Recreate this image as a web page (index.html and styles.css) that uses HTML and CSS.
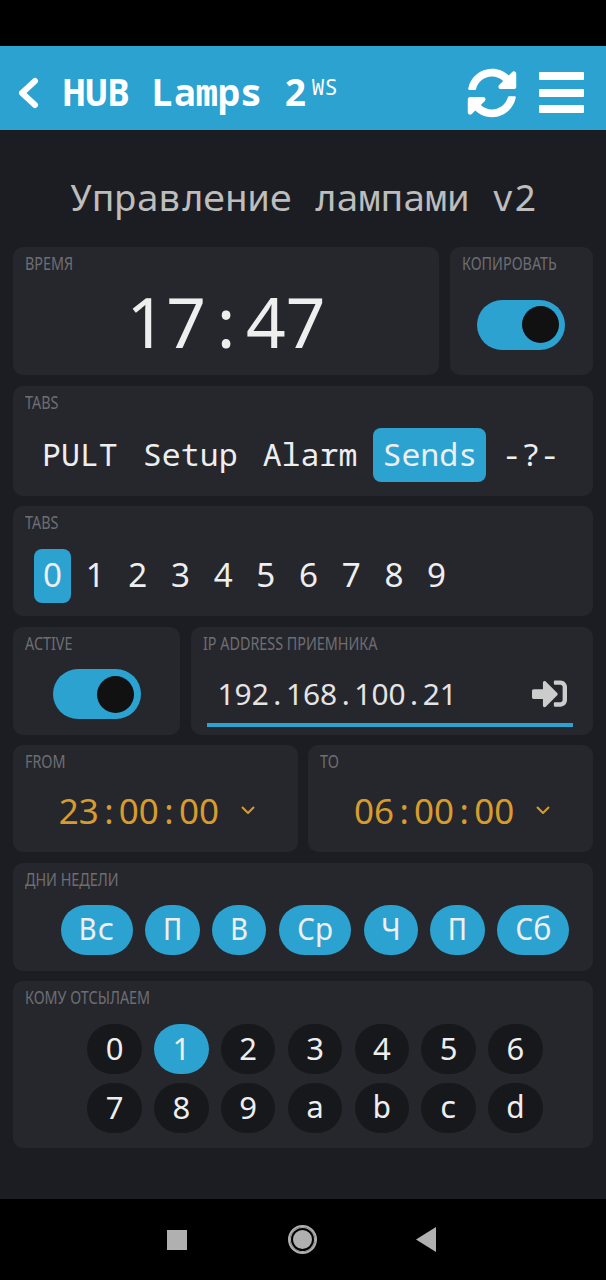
FILE: index.html
```html
<!DOCTYPE html>
<html lang="en">

<head>
    <meta charset="UTF-8">
    <meta name="viewport" content="width=device-width, initial-scale=1.0">
    <title>HUB Lamps 2</title>
    <link rel="stylesheet" href="styles.css">
</head>

<body>

    <div class="status-bar"></div>

    <!-- Top Bar -->
    <div class="top-bar">
        <svg class="back-icon" viewBox="0 0 22 32">
            <path d="M18 4 L5 16 L18 28" />
        </svg>
        <h1>HUB Lamps 2<sup>WS</sup></h1>
        <svg class="sync-icon" viewBox="0 0 512 512">
            <path d="M370.72 133.28C339.458 104.008 298.888 87.962 255.848 88c-77.458.068-144.328 53.178-162.791 126.85-1.344 5.363-6.122 9.15-11.651 9.15H24.103c-7.498 0-13.194-6.807-11.807-14.176C33.933 94.924 134.813 8 256 8c66.448 0 126.791 26.136 171.315 68.685L463.03 40.97C478.149 25.851 504 36.559 504 57.941V192c0 13.255-10.745 24-24 24H345.941c-21.382 0-32.09-25.851-16.971-40.971l41.75-41.749zM32 296h134.059c21.382 0 32.09 25.851 16.971 40.971l-41.75 41.75c31.262 29.273 71.835 45.319 114.876 45.28 77.418-.07 144.315-53.144 162.787-126.849 1.344-5.363 6.122-9.15 11.651-9.15h57.304c7.498 0 13.194 6.807 11.807 14.176C478.067 417.076 377.187 504 256 504c-66.448 0-126.791-26.136-171.315-68.685L48.97 471.03C33.851 486.149 8 475.441 8 454.059V320c0-13.255 10.745-24 24-24z" />
        </svg>
        <div class="menu-icon"><span></span><span></span><span></span></div>
    </div>

    <!-- Controls -->
    <div class="content">
        <h2>Управление лампами v2</h2>

        <div class="row">
            <div class="card card-time">
                <p class="label">Время</p>
                <div class="card-body center clock-body"><span class="num clock">17<i>:</i>47</span></div>
            </div>
            <div class="card card-copy">
                <p class="label">Копировать</p>
                <div class="card-body center"><div class="toggle"><span></span></div></div>
            </div>
        </div>

        <div class="row">
            <div class="card card-tabs">
                <p class="label">Tabs</p>
                <div class="card-body tabs">
                    <span class="tab">PULT</span>
                    <span class="tab">Setup</span>
                    <span class="tab">Alarm</span>
                    <span class="tab active">Sends</span>
                    <span class="tab">-?-</span>
                </div>
            </div>
        </div>

        <div class="row">
            <div class="card card-tabs">
                <p class="label">Tabs</p>
                <div class="card-body tabs tabs-num">
                    <span class="tab num active">0</span>
                    <span class="tab num">1</span>
                    <span class="tab num">2</span>
                    <span class="tab num">3</span>
                    <span class="tab num">4</span>
                    <span class="tab num">5</span>
                    <span class="tab num">6</span>
                    <span class="tab num">7</span>
                    <span class="tab num">8</span>
                    <span class="tab num">9</span>
                </div>
            </div>
        </div>

        <div class="row">
            <div class="card card-active">
                <p class="label">Active</p>
                <div class="card-body center"><div class="toggle"><span></span></div></div>
            </div>
            <div class="card card-ip">
                <p class="label">IP address приемника</p>
                <div class="card-body ip-field">
                    <span class="num ip-value">192<i>.</i>168<i>.</i>100<i>.</i>21</span>
                    <svg class="enter-icon" viewBox="0 0 512 512">
                        <path d="M416 448h-84c-6.6 0-12-5.4-12-12v-40c0-6.6 5.4-12 12-12h84c17.7 0 32-14.3 32-32V160c0-17.7-14.3-32-32-32h-84c-6.6 0-12-5.4-12-12V76c0-6.6 5.4-12 12-12h84c53 0 96 43 96 96v192c0 53-43 96-96 96zm-47-201L201 79c-15-15-41-4.5-41 17v96H24c-13.3 0-24 10.7-24 24v96c0 13.3 10.7 24 24 24h136v96c0 21.5 26 32 41 17l168-168c9.3-9.4 9.3-24.6 0-34z" />
                    </svg>
                </div>
            </div>
        </div>

        <div class="row">
            <div class="card card-range">
                <p class="label">From</p>
                <div class="card-body center time-select">
                    <span class="num">23<i>:</i>00<i>:</i>00</span>
                    <svg viewBox="0 0 14 8"><path d="M1 1 L7 7 L13 1" /></svg>
                </div>
            </div>
            <div class="card card-range">
                <p class="label">To</p>
                <div class="card-body center time-select">
                    <span class="num">06<i>:</i>00<i>:</i>00</span>
                    <svg viewBox="0 0 14 8"><path d="M1 1 L7 7 L13 1" /></svg>
                </div>
            </div>
        </div>

        <div class="row">
            <div class="card card-days">
                <p class="label">Дни недели</p>
                <div class="card-body pills">
                    <span class="pill active">Вс</span>
                    <span class="pill active">П</span>
                    <span class="pill active">В</span>
                    <span class="pill active">Ср</span>
                    <span class="pill active">Ч</span>
                    <span class="pill active">П</span>
                    <span class="pill active">Сб</span>
                </div>
            </div>
        </div>

        <div class="row">
            <div class="card card-targets">
                <p class="label">Кому отсылаем</p>
                <div class="targets">
                    <span class="pill num">0</span>
                    <span class="pill num active">1</span>
                    <span class="pill num">2</span>
                    <span class="pill num">3</span>
                    <span class="pill num">4</span>
                    <span class="pill num">5</span>
                    <span class="pill num">6</span>
                    <span class="pill num">7</span>
                    <span class="pill num">8</span>
                    <span class="pill num">9</span>
                    <span class="pill">a</span>
                    <span class="pill">b</span>
                    <span class="pill">c</span>
                    <span class="pill">d</span>
                </div>
            </div>
        </div>
    </div>

    <!-- Android navigation -->
    <div class="nav-bar">
        <span class="nav-square"></span>
        <span class="nav-circle"></span>
        <span class="nav-back"></span>
    </div>

</body>

</html>
```

FILE: styles.css
```css
/* Basic reset */
* {
    margin: 0;
    padding: 0;
    box-sizing: border-box;
}

body {
    display: flex;
    flex-direction: column;
    height: 1280px;
    background-color: #1c1d22;
    font-family: "Noto Sans Mono", "DejaVu Sans Mono", monospace;
    color: #eee;
    overflow: hidden;
}

/* Digits without the slashed zero, separators keep a full cell */
.num {
    font-family: "Noto Sans", sans-serif;
}

.num i {
    display: inline-block;
    width: 0.572em;
    font-style: normal;
    text-align: center;
}

.status-bar {
    height: 46px;
    background-color: #000;
}

/* Top Bar */
.top-bar {
    display: flex;
    align-items: center;
    height: 84px;
    padding: 9px 22px 0 17px;
    background-color: #2ca2d1;
    color: #fff;
}

.top-bar h1 {
    flex: 1;
    margin-left: 24px;
    font-size: 36.9px;
    font-weight: bold;
    line-height: 1;
}

.top-bar sup {
    margin-left: 5px;
    font-size: 21.6px;
    font-weight: normal;
    line-height: 0;
    vertical-align: 11px;
}

.back-icon {
    width: 22px;
    height: 32px;
    fill: none;
    stroke: #fff;
    stroke-width: 6;
    stroke-linecap: round;
    stroke-linejoin: round;
}

.sync-icon {
    width: 50px;
    height: 50px;
    margin-right: 22px;
    fill: #fff;
}

.menu-icon {
    display: flex;
    flex-direction: column;
    gap: 8.5px;
    width: 45px;
}

.menu-icon span {
    height: 8px;
    background-color: #fff;
    border-radius: 1px;
}

/* Controls */
.content {
    flex: 1;
    display: flex;
    flex-direction: column;
    gap: 10.5px;
    padding: 0 13px;
}

.content h2 {
    height: 106.5px;
    padding-top: 45px;
    font-size: 37px;
    font-weight: normal;
    line-height: 44px;
    text-align: center;
    color: #bdbdbd;
}

.row {
    display: flex;
    gap: 10.5px;
}

.card {
    display: flex;
    flex-direction: column;
    padding: 6px 12px 0;
    background-color: #26272d;
    border-radius: 10px;
}

.label {
    height: 20px;
    font-family: "Noto Sans", sans-serif;
    font-size: 17.5px;
    line-height: 20px;
    text-transform: uppercase;
    white-space: nowrap;
    color: #6d6e73;
    transform: scaleX(0.82);
    transform-origin: left;
}

.card-body {
    flex: 1;
    display: flex;
    align-items: center;
}

.center {
    justify-content: center;
}

.card-time { width: 426px; height: 128px; }
.card-copy { width: 143.5px; height: 128px; }
.card-tabs { width: 100%; height: 110px; }
.card-active { width: 167px; height: 108px; }
.card-ip { flex: 1; height: 108px; }
.card-range { flex: 1; height: 107px; }
.card-days { width: 100%; height: 108px; }
.card-targets { width: 100%; height: 167px; }

.clock-body {
    padding-bottom: 5px;
}

.clock {
    font-size: 69.5px;
    line-height: 1;
    color: #eee;
}

/* Toggle */
.toggle {
    display: flex;
    justify-content: flex-end;
    align-items: center;
    width: 88px;
    height: 50px;
    margin-top: 1px;
    padding-right: 6.5px;
    background-color: #2ca2d1;
    border-radius: 25px;
}

.toggle span {
    width: 37px;
    height: 37px;
    background-color: #111;
    border-radius: 50%;
}

/* Tabs */
.tabs {
    gap: 7px;
    padding: 3px 0 0 8px;
}

.tabs-num {
    gap: 5.7px;
    padding-left: 9px;
}

.tab {
    height: 54px;
    padding: 0 9px;
    font-size: 31.6px;
    line-height: 52px;
    border-radius: 8px;
}

.tab.num {
    font-size: 33.2px;
    line-height: 52px;
}

.tab.active {
    background-color: #2ca2d1;
}

/* IP input */
.ip-field {
    justify-content: space-between;
    margin: 0 8px 8px 4px;
    padding: 11px 6px 0 11px;
    border-bottom: 4px solid #2ca2d1;
}

.ip-value {
    font-size: 29.9px;
    color: #e4e4e4;
}

.enter-icon {
    width: 35px;
    height: 35px;
    fill: #ccc;
}

/* Time selects */
.time-select {
    gap: 22px;
    padding: 0 0 3px 3px;
    font-size: 35px;
    color: #d79c2d;
}

.time-select svg {
    width: 14px;
    height: 8px;
    fill: none;
    stroke: #d79c2d;
    stroke-width: 2;
}

/* Round buttons */
.pills {
    justify-content: center;
    gap: 12.4px;
    padding-left: 24px;
}

.targets {
    display: grid;
    grid-template-columns: repeat(7, 54.4px);
    justify-content: center;
    gap: 9px 12.4px;
    padding: 17px 0 0 24px;
}

.pill {
    height: 50px;
    padding: 0 18px;
    font-size: 30.4px;
    line-height: 48px;
    text-align: center;
    color: #eee;
    background-color: #17181b;
    border-radius: 25px;
}

.pill.num {
    padding: 0;
    font-size: 31px;
}

.targets .pill {
    padding: 0;
}

.pill.active {
    background-color: #2ca2d1;
}

/* Android navigation */
.nav-bar {
    display: flex;
    justify-content: center;
    align-items: center;
    height: 81px;
    padding-right: 3px;
    background-color: #000;
}

.nav-square {
    width: 20px;
    height: 20px;
    background-color: #b0b0b0;
}

.nav-circle {
    width: 29px;
    height: 29px;
    margin: 0 99px 0 101px;
    background-color: #b0b0b0;
    border: 5px double #000;
    outline: 2px solid #b0b0b0;
    outline-offset: -2px;
    border-radius: 50%;
}

.nav-back {
    width: 20px;
    height: 25px;
    background-color: #b0b0b0;
    clip-path: polygon(0 50%, 100% 0, 100% 100%);
}
```
